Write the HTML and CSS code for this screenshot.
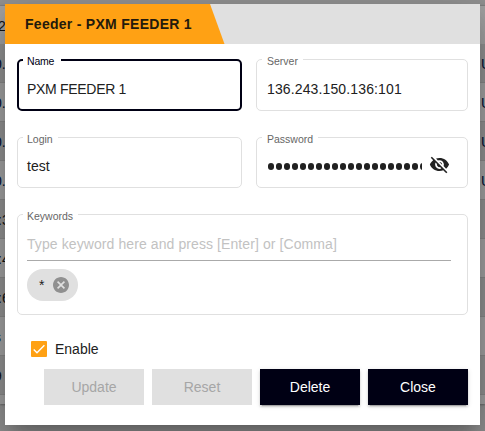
FILE: index.html
```html
<!DOCTYPE html>
<html lang="en">
<head>
<meta charset="utf-8">
<title>Feeder</title>
<link rel="stylesheet" href="styles.css">
</head>
<body>
<div class="table">
  <div class="row head"><span>2</span></div>
  <div class="row"><span class="link">0.</span><span class="link">U</span></div>
  <div class="row"><span class="link">0.</span><span class="link">U</span></div>
  <div class="row"><span class="link">0.</span><span class="link">U</span></div>
  <div class="row"><span class="link">0.</span><span class="link">U</span></div>
  <div class="row"><span class="wide">:3</span></div>
  <div class="row"><span class="wide">:4</span></div>
  <div class="row"><span class="wide">:6</span></div>
  <div class="row"><span class="short">s</span></div>
  <div class="row"><span class="short">9</span></div>
  <div class="foot"></div>
</div>
<div class="dialog">
  <div class="header"><div class="title">Feeder - PXM FEEDER 1</div></div>
  <div class="body">
    <div class="fields">
      <div class="field focused"><label>Name</label><span class="v name">PXM FEEDER 1</span></div>
      <div class="field right"><label>Server</label><span class="v server">136.243.150.136:101</span></div>
      <div class="field low"><label>Login</label><span class="v">test</span></div>
      <div class="field low right"><label>Password</label>
        <span class="dots"><i></i><i></i><i></i><i></i><i></i><i></i><i></i><i></i><i></i><i></i><i></i><i></i><i></i><i></i><i></i><i></i><i></i><i></i><i></i><i></i></span>
        <svg class="eye" viewBox="0 0 24 24"><path d="M12 7c2.76 0 5 2.24 5 5 0 .65-.13 1.26-.36 1.83l2.92 2.92c1.51-1.26 2.7-2.89 3.43-4.75-1.73-4.39-6-7.5-11-7.5-1.4 0-2.74.25-3.98.7l2.16 2.16C10.74 7.13 11.35 7 12 7zM2 4.27l2.28 2.28.46.46C3.08 8.3 1.78 10.02 1 12c1.73 4.39 6 7.5 11 7.5 1.55 0 3.03-.3 4.38-.84l.42.42L19.73 22 21 20.73 3.27 3 2 4.27zM7.53 9.8l1.55 1.55c-.05.21-.08.43-.08.65 0 1.66 1.34 3 3 3 .22 0 .44-.03.65-.08l1.55 1.55c-.67.33-1.41.53-2.2.53-2.76 0-5-2.24-5-5 0-.79.2-1.53.53-2.2zm4.31-.78l3.15 3.15.02-.16c0-1.66-1.34-3-3-3l-.17.01z"/></svg>
      </div>
    </div>
    <div class="keywords"><label>Keywords</label>
      <div class="entry">Type keyword here and press [Enter] or [Comma]</div>
      <div class="chip"><span>*</span><svg viewBox="2 2 20 20"><path d="M12 2C6.47 2 2 6.47 2 12s4.47 10 10 10 10-4.47 10-10S17.53 2 12 2zm5 13.59L15.59 17 12 13.41 8.41 17 7 15.59 10.59 12 7 8.41 8.41 7 12 10.59 15.59 7 17 8.41 13.41 12 17 15.59z"/></svg></div>
    </div>
    <div class="enable"><svg viewBox="0 0 16 16"><path d="M2.7 8.5 6 11.8 13.4 4.3"/></svg><span>Enable</span></div>
    <div class="actions">
      <div class="btn off">Update</div><div class="btn off">Reset</div><div class="btn">Delete</div><div class="btn">Close</div>
    </div>
  </div>
</div>
</body>
</html>
```
FILE: styles.css
```css
* { box-sizing: border-box; }
body {
  margin: 0; width: 485px; height: 431px; overflow: hidden; position: relative;
  background: #929292; padding-top: 5px;
  font: 14px/16px "Liberation Sans", Arial, sans-serif; color: #212121;
}
.table { height: 399px; background: #a2a2a2; border-top: 1px solid #808080; box-shadow: 0 1px 2px #666; }
.row { height: 39px; padding-top: 2px; display: flex; justify-content: space-between; align-items: center; border-bottom: 1px solid #888; background: #a2a2a2; color: #111; }
.row:nth-child(even) { background: #929292; }
.row.head { height: 38px; border: 0; }
.row span:first-child { margin-left: -2px; }
.row .link { color: #001035; }
.row .link:first-child { margin-left: -6px; }
.row .link:last-child { margin-right: -6px; }
.row .wide:first-child { margin-left: -2px; }
.row .short:first-child { margin-left: -6px; }
.foot { height: 9px; }
.dialog {
  position: absolute; left: 5px; top: 4px; width: 475px; height: 421px; background: #fff;
  box-shadow: 0 11px 15px -7px rgba(0,0,0,.2), 0 24px 38px 3px rgba(0,0,0,.14), 0 9px 46px 8px rgba(0,0,0,.12);
}
.header { height: 40px; background: #e0e0e0; }
.title {
  width: 220px; height: 40px; background: #ffa114; padding-left: 20px; line-height: 41px; letter-spacing: .28px;
  font-weight: bold; color: #231a0c; clip-path: polygon(0 0, 205px 0, 219.5px 100%, 0 100%); white-space: nowrap;
}
.body { padding: 15px 12px 0; }
.fields { display: grid; grid-template-columns: 225px 212px; column-gap: 14px; grid-template-rows: 52px 51px; row-gap: 26px; }
.field, .keywords { position: relative; border: 1px solid #e0e0e0; border-radius: 5px; }
.field { display: flex; align-items: center; padding: 8px 9px 0; }
.field.low { padding-top: 7px; }
.field.right { padding-left: 10px; }
.field.focused { border: 2px solid #000014; padding: 8px 8px 0; }
label { position: absolute; left: 5px; top: -6px; padding: 0 5px 0 4px; background: #fff; font-size: 10.5px; line-height: 14px; color: #666; }
.right label { padding-left: 5px; }
.focused label { left: 4px; top: -7px; color: #000014; padding-right: 7px; letter-spacing: -.2px; }
.v { white-space: nowrap; }
.name { letter-spacing: -.3px; }
.server { letter-spacing: .13px; }
.dots { display: flex; gap: 2px; width: 155px; overflow: hidden; padding-left: 1px; }
.dots i { flex: none; width: 6px; height: 7px; border-radius: 3px; background: #212121; }
.eye { width: 21px; height: 21px; margin-left: 7px; margin-top: -4px; fill: #212121; }
.keywords { height: 101px; margin-top: 26px; padding: 20px 16px 0 9px; }
.entry { height: 26px; border-bottom: 1px solid #aaa; line-height: 18px; color: #c2c2c2; white-space: nowrap; letter-spacing: .09px; }
.chip { width: 51px; height: 32px; margin-top: 8px; border-radius: 16px; background: #e0e0e0; display: flex; align-items: center; padding-left: 12px; }
.chip svg { width: 16px; height: 16px; margin-left: 9px; fill: #909090; }
.enable { display: flex; align-items: center; height: 16px; margin: 26px 0 0 14px; }
.enable svg { width: 16px; height: 16px; background: #ffa114; border-radius: 1px; margin-right: 8px; fill: none; stroke: #fff; stroke-width: 1.4; }
.actions { display: flex; justify-content: flex-end; gap: 8px; margin-top: 12px; }
.btn { width: 100px; height: 36px; line-height: 37px; text-align: center; background: #000014; color: #fff; box-shadow: 0 3px 1px -2px rgba(0,0,0,.2), 0 2px 2px rgba(0,0,0,.14), 0 1px 5px rgba(0,0,0,.12); }
.btn.off { background: #e0e0e0; color: #a6a6a6; box-shadow: none; }
```
